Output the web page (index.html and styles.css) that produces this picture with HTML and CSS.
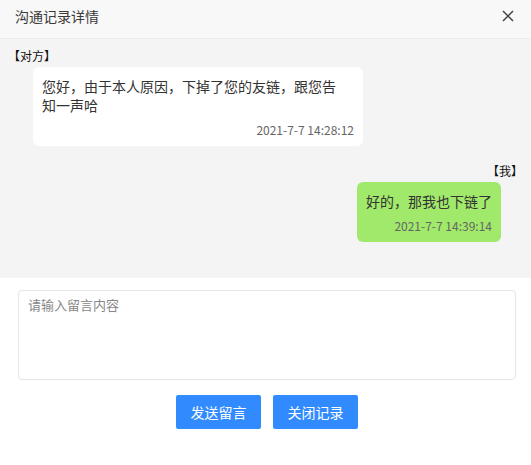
FILE: index.html
```html
<!DOCTYPE html>
<html lang="zh">
<head>
    <meta charset="UTF-8">
    <meta name="viewport" content="width=device-width, initial-scale=1.0">
    <title>沟通记录详情</title>
    <link rel="stylesheet" href="styles.css">
</head>
<body>
    <div class="dialog">
        <div class="dialog-header">
            <span class="dialog-title">沟通记录详情</span>
            <span class="dialog-close">
                <svg width="12" height="12" viewBox="0 0 12 12"><path d="M1 1L11 11M11 1L1 11" stroke="#444" stroke-width="1.5" fill="none"/></svg>
            </span>
        </div>
        <div class="chat">
            <div class="msg msg-other">
                <div class="msg-who">【对方】</div>
                <div class="bubble">
                    <div class="bubble-text">您好，由于本人原因，下掉了您的友链，跟您告知一声哈</div>
                    <div class="bubble-time">2021-7-7 14:28:12</div>
                </div>
            </div>
            <div class="msg msg-me">
                <div class="msg-who">【我】</div>
                <div class="bubble">
                    <div class="bubble-text">好的，那我也下链了</div>
                    <div class="bubble-time">2021-7-7 14:39:14</div>
                </div>
            </div>
        </div>
        <div class="reply">
            <textarea class="reply-input" placeholder="请输入留言内容"></textarea>
            <div class="reply-actions">
                <button class="btn">发送留言</button>
                <button class="btn">关闭记录</button>
            </div>
        </div>
    </div>
</body>
</html>
```

FILE: styles.css
```css
body {
    margin: 0;
    font-family: "Noto Sans CJK SC", "Liberation Sans", sans-serif;
    background: #fff;
    color: #333;
}
.dialog {
    width: 531px;
    height: 465px;
    background: #fff;
}
.dialog-header {
    height: 38px;
    background: #f8f8f8;
    border-bottom: 1px solid #ebebeb;
    display: flex;
    justify-content: space-between;
    align-items: flex-start;
    padding: 0 17px 0 15px;
}
.dialog-title {
    font-size: 14px;
    line-height: 32px;
    color: #3a3a3a;
}
.dialog-close {
    display: flex;
    padding-top: 10px;
}
.chat {
    height: 230px;
    background: #f4f4f4;
    padding: 9px 8px 0 8px;
}
.msg {
    display: flex;
    flex-direction: column;
}
.msg-other {
    align-items: flex-start;
    margin-bottom: 17px;
}
.msg-me {
    align-items: flex-end;
}
.msg-who {
    font-size: 12px;
    line-height: 16px;
    color: #111;
    margin-bottom: 3px;
}
.bubble {
    border-radius: 6px;
    padding: 10px 9px 8px 9px;
}
.msg-other .bubble {
    background: #fff;
    width: 312px;
    margin-left: 25px;
}
.msg-other .bubble-text {
    padding-right: 12px;
}
.msg-me .bubble {
    background: #a0e96a;
    margin-right: 22px;
}
.bubble-text {
    font-size: 14px;
    line-height: 19px;
    color: #333;
}
.bubble-time {
    font-size: 12px;
    line-height: 16px;
    color: #666;
    text-align: right;
    margin-top: 7px;
}
.reply {
    padding: 12px 15px 0 18px;
}
.reply-input {
    display: block;
    width: 100%;
    height: 90px;
    box-sizing: border-box;
    border: 1px solid #e6e6e6;
    border-radius: 4px;
    padding: 5px 9px;
    font-family: inherit;
    font-size: 13px;
    line-height: 18px;
    resize: none;
    outline: none;
}
.reply-input::placeholder {
    color: #888;
}
.reply-actions {
    display: flex;
    justify-content: center;
    gap: 12px;
    margin-top: 15px;
}
.btn {
    width: 85px;
    height: 34px;
    border: none;
    border-radius: 2px;
    background: #318bff;
    color: #fff;
    font-family: inherit;
    font-size: 14px;
    cursor: pointer;
}
```
